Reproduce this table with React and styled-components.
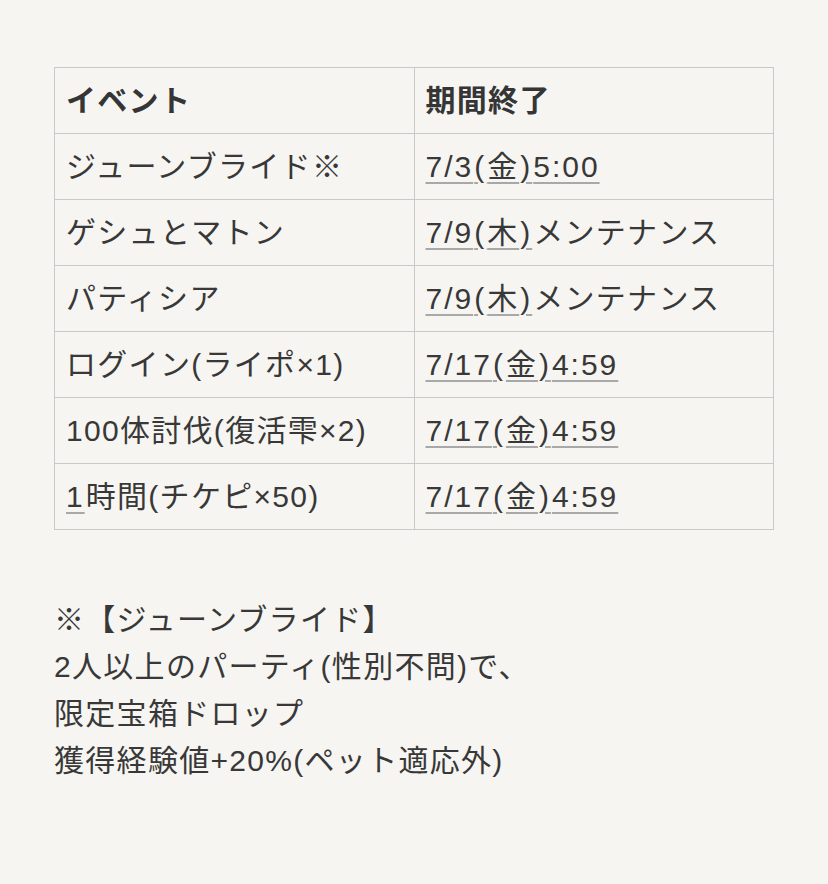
import React from 'react';
import styled, { createGlobalStyle } from 'styled-components';

const GlobalStyle = createGlobalStyle`
  html, body {
    margin: 0;
    padding: 0;
    background: #f6f5f2;
  }
  body {
    font-family: "Liberation Sans", "Noto Sans CJK JP", sans-serif;
    color: #383838;
  }
`;

const rows = [
  { event: 'ジューンブライド※', end: ['7/3', '(', '金', ')', '5:00'] },
  { event: 'ゲシュとマトン', end: ['7/9', '(', '木', ')'], tail: 'メンテナンス' },
  { event: 'パティシア', end: ['7/9', '(', '木', ')'], tail: 'メンテナンス' },
  { event: 'ログイン(ライポ×1)', end: ['7/17', '(', '金', ')', '4:59'] },
  { event: '100体討伐(復活雫×2)', end: ['7/17', '(', '金', ')', '4:59'] },
  { event: '1時間(チケピ×50)', end: ['7/17', '(', '金', ')', '4:59'], linkFirst: true },
];

export default function App() {
  return (
    <Page>
      <GlobalStyle />
      <Table>
        <thead>
          <tr>
            <Th>イベント</Th>
            <Th>期間終了</Th>
          </tr>
        </thead>
        <tbody>
          {rows.map((r, i) => (
            <tr key={i}>
              <Td>
                {r.linkFirst ? (
                  <>
                    <Link>{r.event[0]}</Link>
                    {r.event.slice(1)}
                  </>
                ) : (
                  r.event
                )}
              </Td>
              <Td>
                {r.end.map((part, j) => (
                  <Link key={j}>{part}</Link>
                ))}
                {r.tail}
              </Td>
            </tr>
          ))}
        </tbody>
      </Table>
      <Note>
        <p>※【ジューンブライド】</p>
        <p>2人以上のパーティ(性別不問)で、</p>
        <p>限定宝箱ドロップ</p>
        <p>獲得経験値+20%(ペット適応外)</p>
      </Note>
    </Page>
  );
}

const Page = styled.div`
  width: 828px;
  height: 884px;
  box-sizing: border-box;
  padding: 67px 54px 0 54px;
  overflow: hidden;
`;

const Table = styled.table`
  width: 720px;
  border-collapse: collapse;
  table-layout: fixed;
`;

const Th = styled.th`
  width: 50%;
  height: 66px;
  box-sizing: border-box;
  border: 1px solid #c9c9c9;
  padding: 0 11px 6px 11px;
  text-align: left;
  font-size: 30px;
  font-weight: 700;
  color: #353535;
  letter-spacing: 1.3px;
`;

const Td = styled.td`
  height: 66px;
  box-sizing: border-box;
  border: 1px solid #c9c9c9;
  padding: 0 11px 6px 11px;
  font-size: 30px;
  color: #383838;
  white-space: nowrap;
  letter-spacing: 1.3px;
`;

const Link = styled.span`
  text-decoration: underline;
  text-decoration-color: #a8a8a8;
  text-decoration-thickness: 2px;
  text-underline-offset: 5px;
  letter-spacing: 2px;
  margin-right: 1px;
`;

const Note = styled.div`
  margin-top: 66px;
  font-size: 30px;
  color: #383838;
  letter-spacing: 1.3px;

  p {
    margin: 0;
    line-height: 47px;
  }
`;
